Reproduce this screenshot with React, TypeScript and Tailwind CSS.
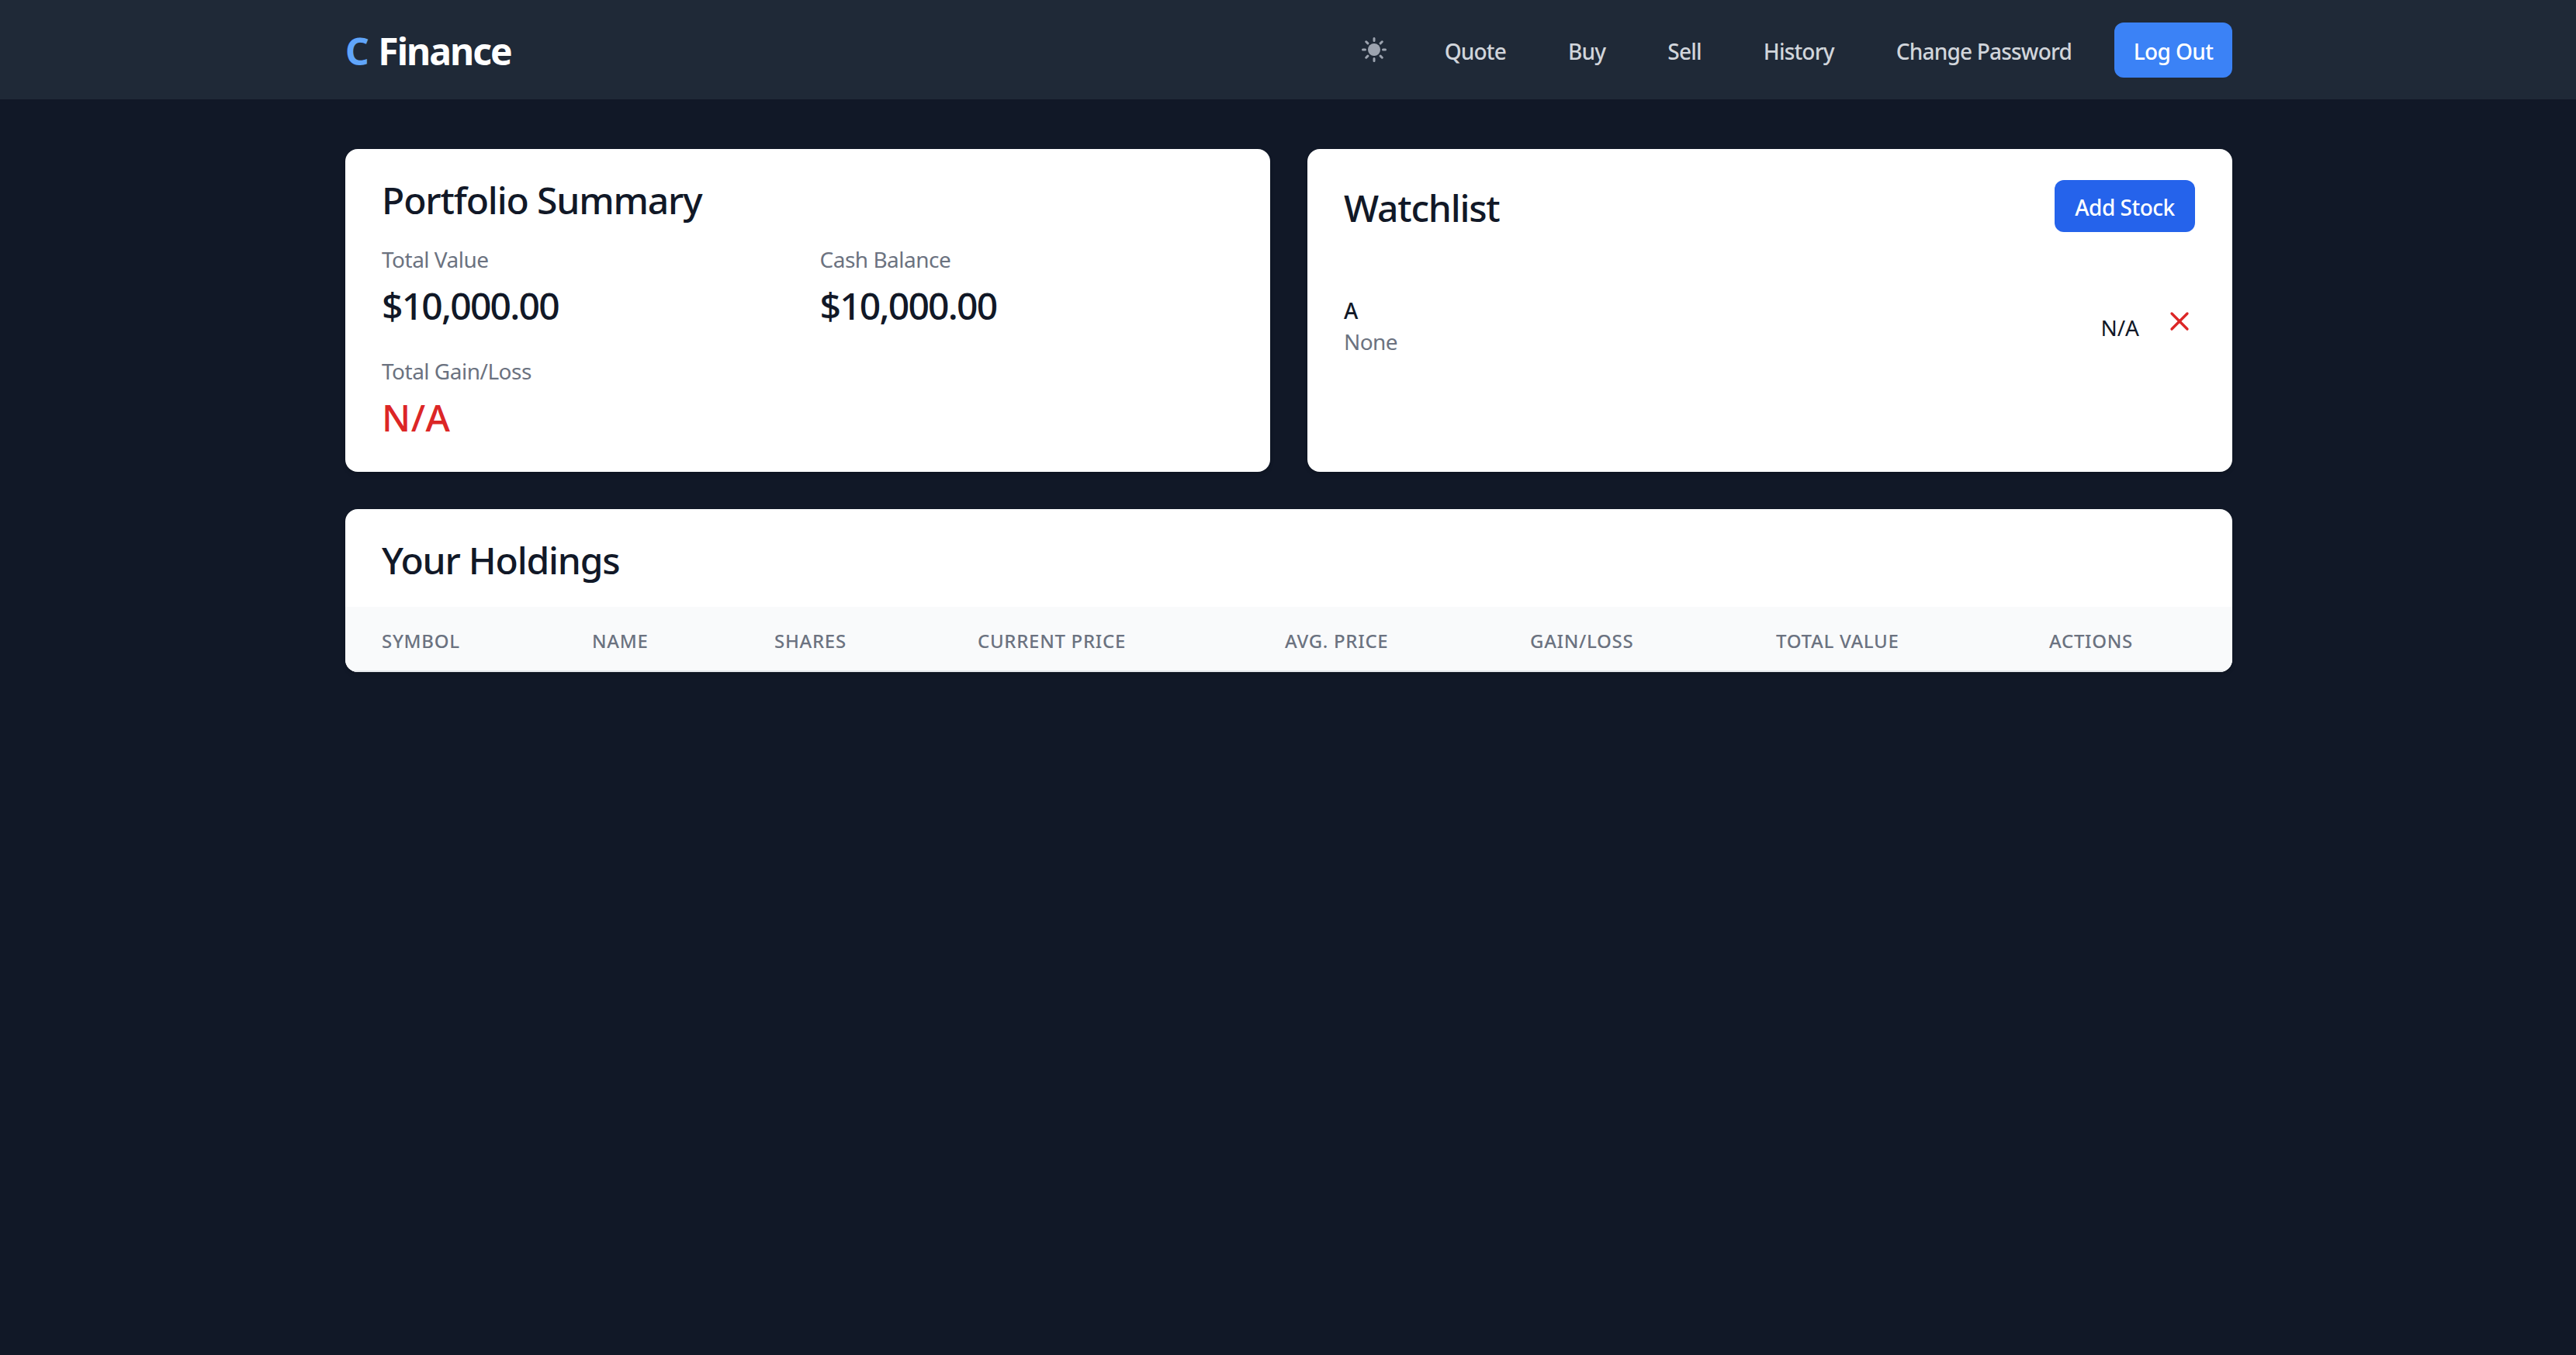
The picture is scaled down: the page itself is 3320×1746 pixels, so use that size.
import { X } from 'lucide-react';

const navLinks = ['Quote', 'Buy', 'Sell', 'History', 'Change Password'];

const columns = [
  { label: 'Symbol', width: 'w-[271px]' },
  { label: 'Name', width: 'w-[235px]' },
  { label: 'Shares', width: 'w-[262px]' },
  { label: 'Current Price', width: 'w-[396px]' },
  { label: 'Avg. Price', width: 'w-[316px]' },
  { label: 'Gain/Loss', width: 'w-[317px]' },
  { label: 'Total Value', width: 'w-[352px]' },
  { label: 'Actions', width: 'w-[283px]' },
];

const SunIcon = () => (
  <svg viewBox="0 0 20 20" className="w-10 h-10 text-[#9ca3af]" fill="currentColor" stroke="currentColor">
    <circle cx="10" cy="10" r="4" stroke="none" />
    <path
      fill="none"
      strokeWidth="1.5"
      strokeLinecap="round"
      d="M10 2.75v1.5M10 15.75v1.5M2.75 10h1.5M15.75 10h1.5M4.87 4.87l1.06 1.06M14.07 14.07l1.06 1.06M4.87 15.13l1.06-1.06M14.07 5.93l1.06-1.06"
    />
  </svg>
);

const Stat = ({ label, value, red }: { label: string; value: string; red?: boolean }) => (
  <div>
    <p className="text-[28px] leading-[40px] text-[#6b7280] tracking-[-0.5px]">{label}</p>
    <p
      className={`mt-2 text-[48px] leading-[64px] font-medium ${
        red ? 'text-[#dc2626] tracking-[0.4px]' : 'text-[#111827] tracking-[-1.8px]'
      }`}
    >
      {value}
    </p>
  </div>
);

export default function App() {
  return (
    <div className="min-h-screen bg-[#111827] font-['Noto_Sans',sans-serif]">
      <nav className="h-32 bg-[#1f2937]">
        <div className="ml-[445px] flex h-full w-[2432px] items-center justify-between">
          <div className="pt-1 text-[48px] leading-[64px] font-bold text-white tracking-[-2px]">
            <span className="mr-[3px] text-[#60a5fa]">C</span> Finance
          </div>
          <div className="flex items-center">
            <button className="mr-[71px] flex">
              <SunIcon />
            </button>
            <div className="flex items-center gap-[80px] pt-1 text-[28px] leading-[40px] font-medium text-[#d1d5db] tracking-[-0.8px]">
              {navLinks.map((link) => (
                <a key={link}>{link}</a>
              ))}
            </div>
            <button className="mt-px ml-[55px] h-[71px] w-[152px] rounded-xl bg-[#3b82f6] pt-[3px] text-[28px] font-medium text-white tracking-[-0.6px]">
              Log Out
            </button>
          </div>
        </div>
      </nav>

      <main className="ml-[445px] w-[2432px] pt-16">
        <div className="grid grid-cols-2 gap-12">
          <section className="h-[416px] rounded-2xl bg-white pt-[42px] pr-12 pl-[47px] shadow-md">
            <h2 className="text-[48px] leading-[48px] font-medium text-[#111827] tracking-[-1.15px]">Portfolio Summary</h2>
            <div className="mt-8 grid grid-cols-2 gap-x-8 gap-y-8">
              <Stat label="Total Value" value="$10,000.00" />
              <Stat label="Cash Balance" value="$10,000.00" />
              <Stat label="Total Gain/Loss" value="N/A" red />
            </div>
          </section>

          <section className="h-[416px] rounded-2xl bg-white pt-10 pr-12 pl-[47px] shadow-md">
            <div className="flex items-start justify-between">
              <h2 className="mt-1 text-[48px] leading-[64px] font-medium text-[#111827] tracking-[-1.2px]">Watchlist</h2>
              <button className="h-[67px] w-[181px] rounded-xl bg-[#2563eb] pt-[2px] text-[28px] font-medium text-white tracking-[-0.5px]">
                Add Stock
              </button>
            </div>
            <div className="mt-20 flex items-center justify-between">
              <div>
                <p className="text-[28px] leading-[40px] font-medium text-[#111827] tracking-[-0.5px]">A</p>
                <p className="text-[28px] leading-[40px] text-[#6b7280] tracking-[-0.6px]">None</p>
              </div>
              <div className="flex items-center gap-8">
                <span className="mt-1 text-[28px] leading-[40px] text-[#111827]">N/A</span>
                <button className="-mt-3 flex text-[#dc2626]">
                  <X className="h-10 w-10" strokeWidth={2} />
                </button>
              </div>
            </div>
          </section>
        </div>

        <section className="mt-12 overflow-hidden rounded-2xl bg-white shadow-md">
          <h2 className="pt-[42px] pr-12 pb-9 pl-[47px] text-[48px] leading-[48px] font-medium text-[#111827] tracking-[-1.2px]">Your Holdings</h2>
          <table className="w-full table-fixed border-b-2 border-[#e5e7eb]">
            <thead className="bg-[#f9fafb]">
              <tr>
                {columns.map((col) => (
                  <th
                    key={col.label}
                    className={`${col.width} h-[83px] pt-[6px] pr-12 pl-[47px] text-left text-[24px] font-medium text-[#6b7280] uppercase tracking-[0.7px]`}
                  >
                    <span className="whitespace-nowrap">{col.label}</span>
                  </th>
                ))}
              </tr>
            </thead>
          </table>
        </section>
      </main>
    </div>
  );
}
